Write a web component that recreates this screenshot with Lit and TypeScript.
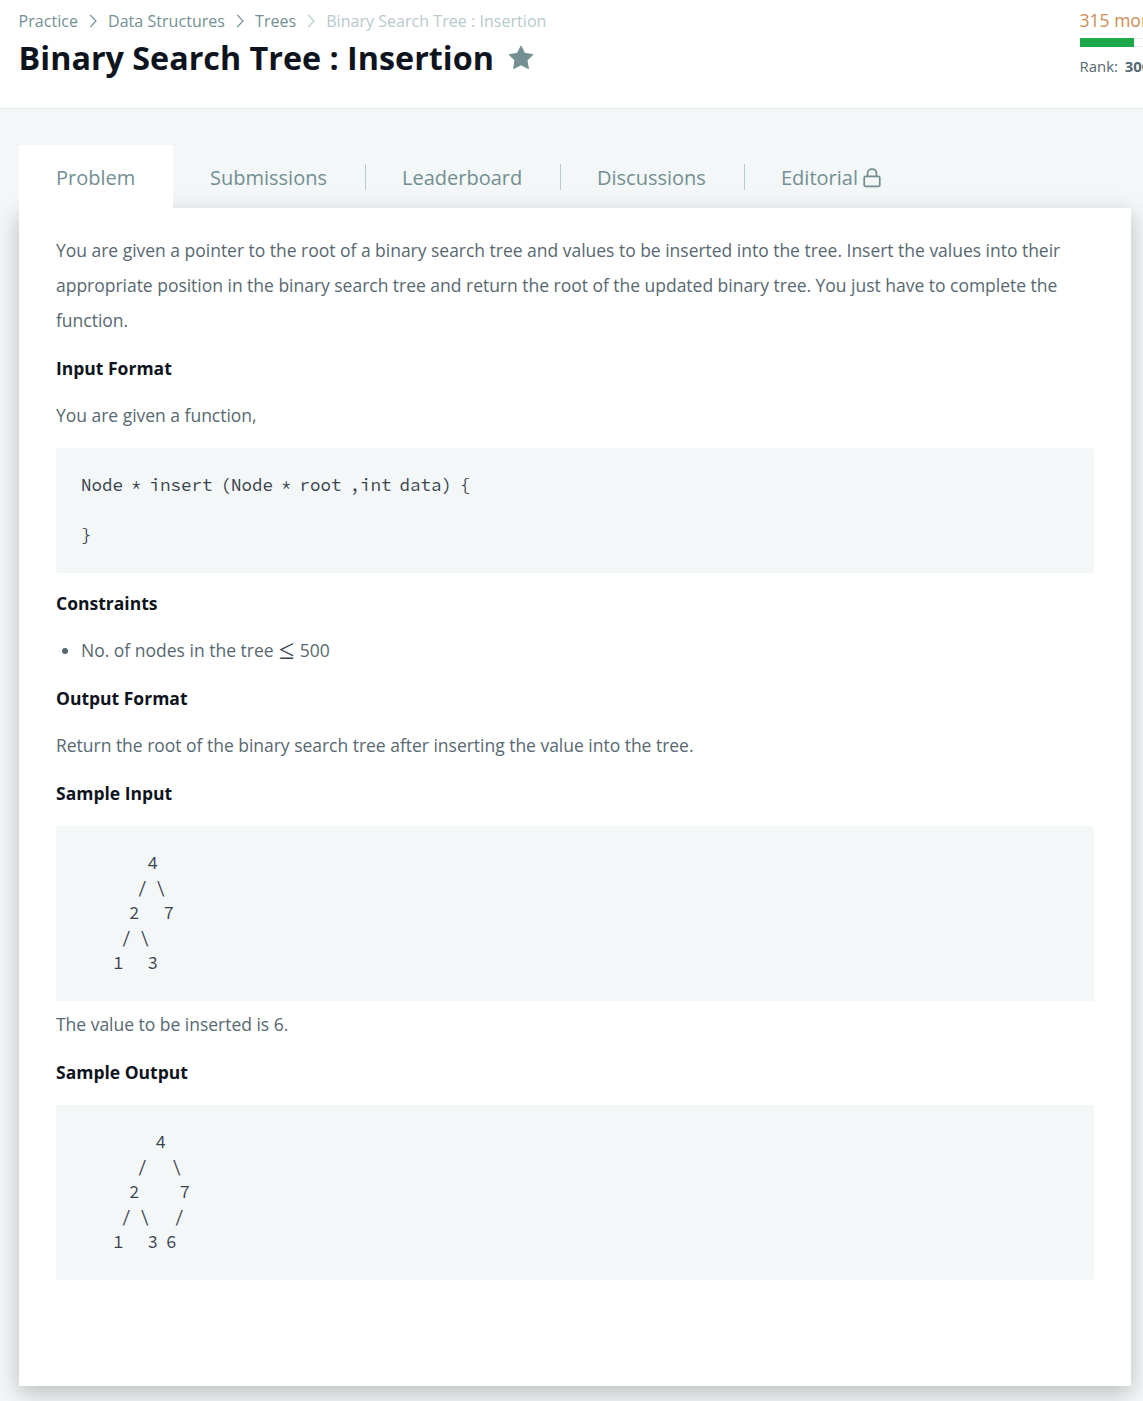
import { LitElement, html, svg, css } from "lit";
import { customElement } from "lit/decorators.js";
import { classMap } from "lit/directives/class-map.js";

const CRUMBS = ["Practice", "Data Structures", "Trees", "Binary Search Tree : Insertion"];
const TABS = ["Problem", "Submissions", "Leaderboard", "Discussions", "Editorial"];

const SIGNATURE = "Node * insert (Node * root ,int data) {\n\n}";
const SAMPLE_INPUT = [
  "4",
  "       / \\",
  "      2   7",
  "     / \\",
  "    1   3",
].join("\n");
const SAMPLE_OUTPUT = [
  " 4",
  "       /   \\",
  "      2     7",
  "     / \\   /",
  "    1   3 6",
].join("\n");
const INDENT = " ".repeat(7);

const chevron = svg`<path d="M1.2 0.8 L7 7 L1.2 13.2" fill="none" stroke="currentColor" stroke-width="1.2"/>`;

@customElement("page-header")
class PageHeader extends LitElement {
  static styles = css`
    :host { display: flex; box-sizing: border-box; height: 108px; padding-left: 18.6px; background: #fff; overflow: hidden; }
    .main { width: 1061px; flex: none; }
    .crumbs { display: flex; align-items: center; height: 24px; margin-top: 9px; font-size: 16px; color: #738f93; letter-spacing: 0.04px; }
    .crumb { white-space: nowrap; }
    .sep { width: 8px; height: 14px; margin: 0 11px; }
    .last { color: #b7c9cc; }
    .heading { display: flex; align-items: center; height: 46px; margin: 1px 0 0; }
    h1 { margin: 0; font-size: 32.3px; font-weight: 700; line-height: 46px; color: #0e141e; white-space: nowrap; }
    .star { width: 26px; height: 25px; margin: 1px 0 0 14px; }
    .stats { flex: none; width: 200px; padding-top: 8px; white-space: nowrap; }
    .points { font-size: 17.5px; line-height: 25px; color: #cd8c52; }
    .track { box-sizing: border-box; width: 200px; height: 9px; margin-top: 5px; border: 1px solid #eaeef0; border-left: 0; background: #fff; }
    .fill { width: 54px; height: 9px; margin-top: -1px; background: #1ba94c; }
    .rank { margin-top: 9px; font-size: 14.9px; line-height: 20px; color: #576871; }
    b { font-weight: 700; margin-left: 3px; }
  `;
  render() {
    const last = CRUMBS.length - 1;
    return html`
      <div class="main">
        <nav class="crumbs">
          ${CRUMBS.map((c, i) => html`
            ${i ? html`<svg class="sep ${i === last ? "last" : ""}" viewBox="0 0 8 14">${chevron}</svg>` : ""}
            <span class="crumb ${i === last ? "last" : ""}">${c}</span>`)}
        </nav>
        <div class="heading">
          <h1>Binary Search Tree : Insertion</h1>
          <svg class="star" viewBox="0 0 26 25"><path fill="#738f93" stroke="#738f93" stroke-width="1" stroke-linejoin="round" d="M13 1 L16.7 8.4 L24.9 9.6 L19 15.4 L20.4 23.6 L13 19.8 L5.6 23.6 L7 15.4 L1.1 9.6 L9.3 8.4 Z"/></svg>
        </div>
      </div>
      <div class="stats">
        <div class="points">315 more points</div>
        <div class="track"><div class="fill"></div></div>
        <div class="rank">Rank: <b>300</b></div>
      </div>`;
  }
}

@customElement("tab-bar")
class TabBar extends LitElement {
  static styles = css`
    :host { display: flex; height: 63px; }
    .tab { box-sizing: border-box; display: flex; align-items: center; height: 63px; padding: 2px 37px 0; font-size: 20px; color: #738f93; white-space: nowrap; }
    .active { background: #fff; }
    .ruled { margin-top: 19px; height: 26px; padding: 0 36px; border-left: 1px solid #b7c9cc; }
    .lock { width: 18px; height: 20px; margin: 2px 0 0 5px; }
  `;
  render() {
    const widths = [154, 192, 195, 184, 176];
    return html`${TABS.map((t, i) => html`
      <div class=${classMap({ tab: true, active: i === 0, ruled: i > 1 })} style="width:${widths[i]}px">${t}${i === 4
        ? html`<svg class="lock" viewBox="0 0 18 20" fill="none" stroke="#738f93" stroke-width="1.7"><rect x="1.2" y="8.4" width="15.6" height="10" rx="1.4"/><path d="M4.6 8.4 V5.4 Q4.6 1.2 9 1.2 Q13.4 1.2 13.4 5.4 V8.4"/></svg>`
        : ""}</div>`)}`;
  }
}

@customElement("app-root")
class AppRoot extends LitElement {
  static styles = css`
    :host { display: block; box-sizing: border-box; height: 1401px; overflow: hidden; background: #f3f7f7; font-family: "Open Sans", sans-serif; }
    .body { box-sizing: border-box; height: 1293px; padding: 36px 12px 0 19px; border-top: 1px solid #e9eff0; }
    .card { box-sizing: border-box; height: 1178px; padding: 25px 37px 0; background: #fff; box-shadow: 0 7px 22px rgba(0, 0, 0, 0.24); }
    tab-bar { position: relative; z-index: 1; }
    .card, .body { color: #576871; font-size: 17.5px; }
    p { margin: 0 0 13px; line-height: 35px; letter-spacing: -0.019px; }
    h2 { margin: 0 0 12px; font-size: 17.5px; font-weight: 700; line-height: 35px; color: #0e141e; }
    pre { box-sizing: border-box; margin: 15px 0 13px; padding: 25px; border-radius: 2px; background: #f3f7f7; color: #39424e; font: 17.5px/25px "Source Code Pro", "Liberation Mono", monospace; word-spacing: -2.5px; }
    .tight { margin-bottom: 6px; }
    .wide { word-spacing: 0; }
    .item { display: flex; align-items: center; height: 33px; margin-bottom: 15px; }
    .dot { width: 6px; height: 6px; margin: 2px 13px 0 6px; border-radius: 50%; background: #576871; }
    .le { font-family: "Liberation Serif", serif; font-size: 28px; line-height: 28px; color: #39424e; margin: 1px 5.5px 0 5.3px; }
  `;
  render() {
    return html`
      <page-header></page-header>
      <div class="body">
        <tab-bar></tab-bar>
        <main class="card">
          <p>You are given a pointer to the root of a binary search tree and values to be inserted into the tree. Insert the values into their appropriate position in the binary search tree and return the root of the updated binary tree. You just have to complete the function.</p>
          <h2>Input Format</h2>
          <p>You are given a function,</p>
          <pre>${SIGNATURE}</pre>
          <h2>Constraints</h2>
          <div class="item"><i class="dot"></i><span>No. of nodes in the tree</span><span class="le">≤</span><span>500</span></div>
          <h2>Output Format</h2>
          <p>Return the root of the binary search tree after inserting the value into the tree.</p>
          <h2>Sample Input</h2>
          <pre class="tight">${INDENT}<span class="wide"> </span>${SAMPLE_INPUT}</pre>
          <p>The value to be inserted is 6.</p>
          <h2>Sample Output</h2>
          <pre>${INDENT}<span class="wide"> </span>${SAMPLE_OUTPUT}</pre>
        </main>
      </div>`;
  }
}
